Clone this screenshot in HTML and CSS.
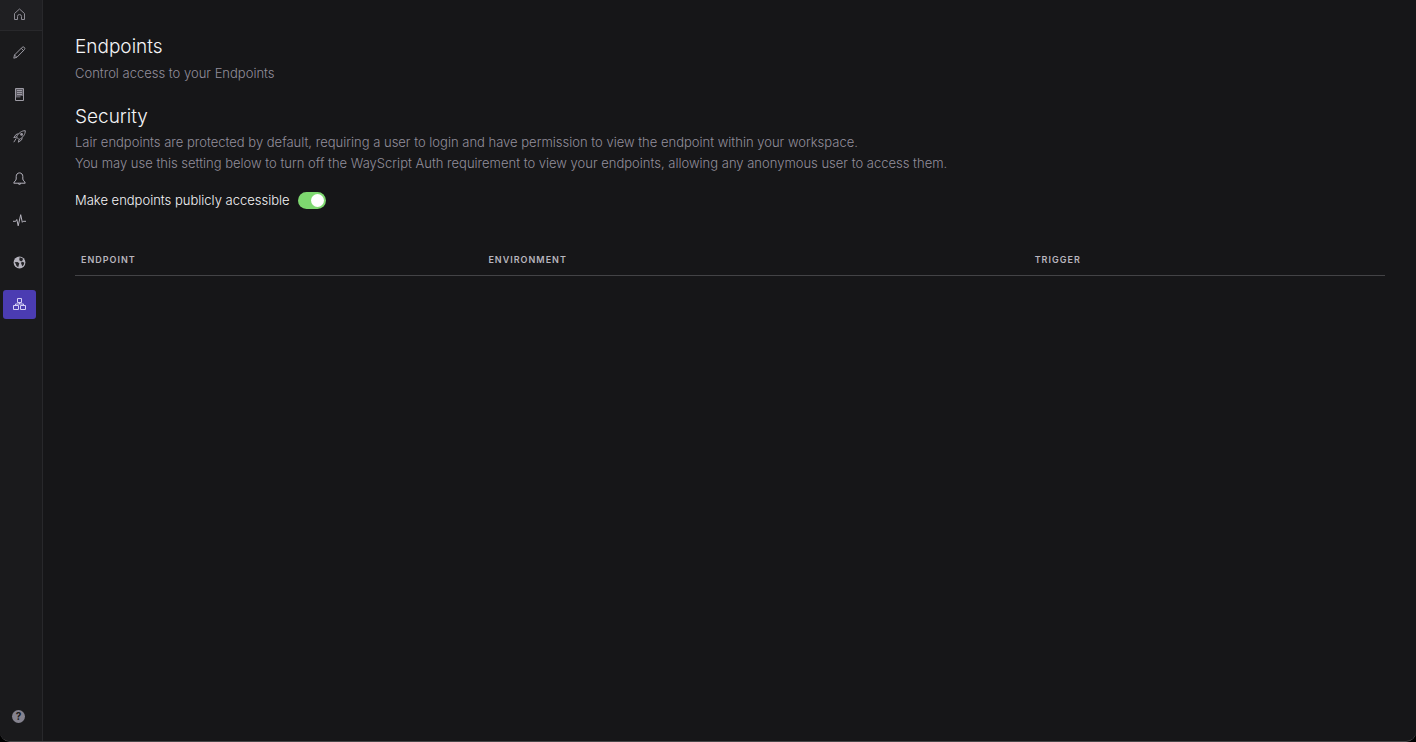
FILE: index.html
```html
<!DOCTYPE html>
<html lang="en">
<head>
    <meta charset="UTF-8">
    <meta name="viewport" content="width=device-width, initial-scale=1.0">
    <title>Endpoints</title>
    <link rel="stylesheet" href="styles.css">
</head>
<body>
    <div class="app">
        <aside class="sidebar">
            <a class="home-link" href="#" aria-label="Home">
                <svg class="icon" viewBox="0 0 13 13"><path d="M1.500 5.500 6.500 1l5 4.500v6h-3V8.500a2 2 0 0 0-4 0v3h-3z"/></svg>
            </a>
            <nav class="nav">
                <a class="nav-item" href="#" aria-label="Edit">
                    <svg class="icon" viewBox="0 0 13 13"><path d="M.8 12.200 1.500 9 9.200 1.300q1.100-.9 2.100.1t.2 2.100L3.900 11.300zM8.200 2.300l2.400 2.400M1.500 9l2.400 2.300"/></svg>
                </a>
                <a class="nav-item" href="#" aria-label="Logs">
                    <svg class="icon" viewBox="0 0 13 13"><path class="shade" d="M3 1h7v7H7.500v1.500H3z"/><path d="M2.500.5h8v12h-8zM4 2.500h5M4 4.500h5M4 6.500h5"/></svg>
                </a>
                <a class="nav-item" href="#" aria-label="Deploy">
                    <svg class="icon" viewBox="0 0 13 13"><path d="M12.300.7C8.500.7 5.500 3 3.500 7L6 9.500c4-2 6.300-5 6.300-8.800zM5.500 3.700 3 4.500.8 7.700l2.700-.7M9.300 7.500 8.500 10l-3.200 2.200.7-2.700M3.300 8.300.8 12.200"/><circle class="solid" cx="8.600" cy="4.400" r="1.400"/></svg>
                </a>
                <a class="nav-item nav-bright" href="#" aria-label="Notifications">
                    <svg class="icon" viewBox="0 0 13 13"><path d="M6.500.9C4.400.9 3.200 2.500 3.200 4.500V7c0 1.800-2.400 2.400-2.400 4.200h11.400c0-1.800-2.400-2.400-2.400-4.200V4.500c0-2-1.200-3.600-3.300-3.600z"/><path d="M5 11.500q1.500 2 3 0"/></svg>
                </a>
                <a class="nav-item nav-bright" href="#" aria-label="Activity">
                    <svg class="icon" viewBox="0 0 13 13"><path d="M0 7.300h2.700l1.100-1.800 1.400 6.300L7.700.7l1.600 7.600.9-1h2.800"/></svg>
                </a>
                <a class="nav-item nav-bright" href="#" aria-label="World">
                    <svg class="icon" viewBox="0 0 13 13"><circle class="disc" cx="6.500" cy="6.500" r="5.900"/><path class="land" d="M1.600 6.300 4.500 6l1.800 1.300L5.800 9l-.6 2.200L3.400 9.700 2.800 8zM6.600 1.300l3 1 .3 1.800L8.300 5.500 6.300 4.300zM7.800 6.700l1.800-.9 1.700 1L10.600 9 9.200 10.300 8.500 8.300z"/></svg>
                </a>
                <a class="nav-item active" href="#" aria-label="Endpoints" aria-current="page">
                    <svg class="icon" viewBox="0 0 13 13"><path d="M4.500.5h4v4h-4zM.5 7.500h5v4h-5zM7.500 7.500h5v4h-5zM6.500 4.500V6M2.500 7.500V6h8v1.500"/></svg>
                </a>
            </nav>
            <a class="help-link" href="#" aria-label="Help">?</a>
        </aside>

        <main class="content">
            <section class="intro">
                <h1>Endpoints</h1>
                <p>Control access to your Endpoints</p>
            </section>

            <section class="security">
                <h2>Security</h2>
                <p>Lair endpoints are protected by default, requiring a user to login and have permission to view the endpoint within your workspace.<br>
                You may use this setting below to turn off the WayScript Auth requirement to view your endpoints, allowing any anonymous user to access them.</p>
                <div class="setting">
                    <label for="public-access">Make endpoints publicly accessible</label>
                    <input class="switch" type="checkbox" role="switch" id="public-access" checked>
                </div>
            </section>

            <table class="endpoint-table">
                <thead>
                    <tr>
                        <th class="col-endpoint" scope="col">Endpoint</th>
                        <th class="col-environment" scope="col">Environment</th>
                        <th scope="col">Trigger</th>
                    </tr>
                </thead>
                <tbody></tbody>
            </table>
        </main>
    </div>
</body>
</html>
```

FILE: styles.css
```css
* {
    box-sizing: border-box;
}
body {
    margin: 0;
    background: #000;
    color: #f4f4f6;
    font-family: Inter, "Liberation Sans", sans-serif;
    font-size: 13px;
    font-weight: 300;
    line-height: 21px;
}
.app {
    display: flex;
    min-height: 100vh;
    background: #161618;
    border-bottom: 1px solid #48484a;
    border-radius: 0 0 10px 10px;
    overflow: hidden;
}

/* Sidebar */
.sidebar {
    display: flex;
    flex-direction: column;
    flex-shrink: 0;
    width: 43px;
    padding-bottom: 18px;
    background: #1a1a1c;
    border-right: 1px solid #28282b;
}
.home-link {
    display: flex;
    align-items: center;
    justify-content: center;
    height: 31px;
    padding: 0 3px 2px 0;
    background: #1f1f22;
    border-bottom: 1px solid #28282b;
    color: #8d8b94;
}
.nav {
    display: flex;
    flex-direction: column;
    gap: 13px;
    padding: 7px 6px 0 3px;
}
.nav-item {
    display: flex;
    align-items: center;
    justify-content: center;
    height: 29px;
    border-radius: 3px;
    color: #9c9aa3;
}
.nav-bright {
    color: #b5b3bd;
}
.nav-item.active {
    background: #4b3cb2;
    color: #d5d0f5;
}
.icon {
    width: 13px;
    height: 13px;
    fill: none;
    stroke: currentColor;
    stroke-width: 1;
    stroke-linejoin: round;
}
.icon .shade {
    fill: #5c5a62;
    stroke: none;
}
.icon .disc,
.icon .solid {
    fill: currentColor;
    stroke: none;
}
.icon .land {
    fill: #242427;
    stroke: none;
}
.help-link {
    width: 13px;
    height: 13px;
    margin: auto 0 0 12px;
    border-radius: 50%;
    background: #85838f;
    color: #1a1a1c;
    font-size: 10px;
    font-weight: 700;
    line-height: 13px;
    text-align: center;
    text-decoration: none;
}

/* Page */
.content {
    flex: 1;
    min-width: 0;
    padding: 34px 31px 32px 32px;
}
h1,
h2 {
    margin: 0;
    font-size: 19px;
    font-weight: 300;
    line-height: 26px;
}
p {
    margin: 0;
    color: #928e9b;
}
.intro p {
    margin-top: 3px;
}
.security {
    margin-top: 20px;
}
.security p {
    margin-top: 2px;
}
.setting {
    display: flex;
    align-items: center;
    gap: 8px;
    margin-top: 16px;
}
.switch {
    display: flex;
    align-items: center;
    justify-content: flex-end;
    appearance: none;
    width: 28px;
    height: 17px;
    margin: 0;
    padding: 2px;
    border-radius: 9px;
    background: #55555a;
    cursor: pointer;
}
.switch::before {
    content: "";
    width: 13px;
    height: 13px;
    border-radius: 50%;
    background: #fff;
}
.switch:not(:checked) {
    justify-content: flex-start;
}
.switch:checked {
    background: #7ed870;
}
.endpoint-table {
    width: 100%;
    margin-top: 33px;
    border-collapse: collapse;
    table-layout: fixed;
}
.endpoint-table th {
    height: 31px;
    padding: 2px 6px 0;
    border-bottom: 1px solid #434346;
    color: #b8b5bd;
    font-size: 9px;
    font-weight: 600;
    letter-spacing: 1px;
    line-height: 12px;
    text-align: left;
    text-transform: uppercase;
}
.col-endpoint {
    width: 31.1%;
}
.col-environment {
    width: 41.7%;
}
```
